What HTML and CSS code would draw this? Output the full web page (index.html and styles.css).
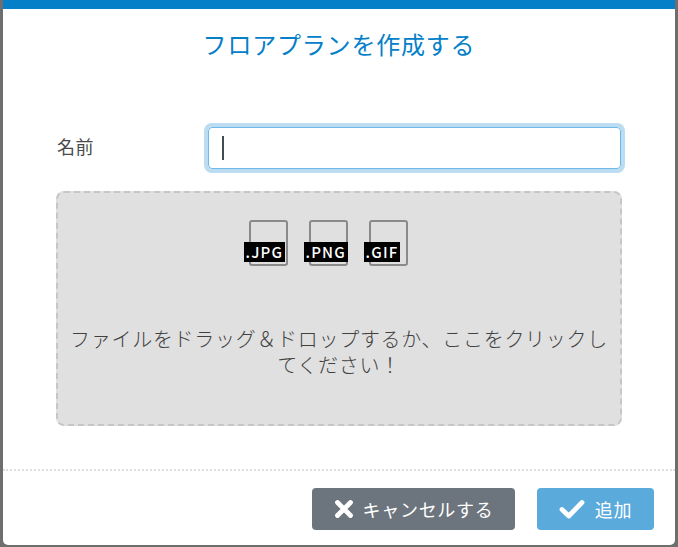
FILE: index.html
```html
<!DOCTYPE html>
<html lang="ja">
<head>
  <meta charset="UTF-8" />
  <title>フロアプランを作成する</title>
  <link rel="stylesheet" href="styles.css">
</head>
<body>
  <div class="modal">
    <h2 class="modal-title">フロアプランを作成する</h2>

    <div class="modal-body">
      <div class="form-row">
        <label class="form-label" for="name">名前</label>
        <div class="name-input" id="name"><span class="caret"></span></div>
      </div>

      <div class="dropzone">
        <div class="file-icons">
          <div class="file-icon"><span class="file-ext">.JPG</span></div>
          <div class="file-icon"><span class="file-ext">.PNG</span></div>
          <div class="file-icon"><span class="file-ext">.GIF</span></div>
        </div>
        <p class="drop-text">ファイルをドラッグ＆ドロップするか、ここをクリックしてください！</p>
      </div>
    </div>

    <div class="modal-footer">
      <button class="btn btn-cancel">
        <svg class="btn-icon" width="20" height="20" viewBox="0 0 20 20"><path d="M3.5 3.5 L16.5 16.5 M16.5 3.5 L3.5 16.5" fill="none" stroke="#fff" stroke-width="4.8" stroke-linecap="round"/></svg>
        キャンセルする
      </button>
      <button class="btn btn-add">
        <svg class="btn-icon" width="26" height="20" viewBox="0 0 26 20"><path d="M3 10.5 L9.8 17 L23 3.5" fill="none" stroke="#fff" stroke-width="4.8" stroke-linecap="round" stroke-linejoin="round"/></svg>
        追加
      </button>
    </div>
  </div>
</body>
</html>
```

FILE: styles.css
```css
html, body {
  height: 100%;
}

body {
  margin: 0;
  padding: 0 3px 2px;
  box-sizing: border-box;
  background-color: #6e6e6e;
  font-family: "Noto Sans CJK JP", "Noto Sans", sans-serif;
  color: #4a4a4a;
  overflow: hidden;
}

.modal {
  height: 100%;
  box-sizing: border-box;
  display: flex;
  flex-direction: column;
  background-color: #fff;
  border-top: 9px solid #0580c8;
  border-radius: 0 0 5px 5px;
}

.modal-title {
  margin: 0;
  padding-top: 17px;
  height: 49px;
  box-sizing: content-box;
  text-align: center;
  font-size: 24px;
  line-height: 36px;
  font-weight: 400;
  letter-spacing: 0.8px;
  color: #0580c8;
}

.modal-body {
  flex: 1;
  padding: 52px 53px 0;
}

.form-row {
  display: flex;
  align-items: center;
}

.form-label {
  width: 151px;
  padding-left: 1px;
  padding-bottom: 4px;
  font-size: 18px;
  line-height: 24px;
  letter-spacing: 0.5px;
}

.name-input {
  flex: 1;
  height: 42px;
  box-sizing: border-box;
  display: flex;
  align-items: center;
  margin-right: 1px;
  padding-left: 13px;
  border: 1px solid #6db9e8;
  border-radius: 4px;
  box-shadow: 0 0 0 4px #bcdcf2;
}

.caret {
  width: 2px;
  height: 24px;
  background-color: #444b52;
}

.dropzone {
  margin-top: 22px;
  height: 235px;
  box-sizing: border-box;
  padding: 27px 10px 0;
  background-color: #e0e0e0;
  border: 2px dashed #c6c6c6;
  border-radius: 8px;
}

.file-icons {
  display: flex;
  justify-content: center;
  gap: 21px;
  margin-right: 22px;
}

.file-icon {
  position: relative;
  width: 39px;
  height: 46px;
  box-sizing: border-box;
  border: 2px solid #8a8a8a;
  border-radius: 3px;
}

.file-ext {
  position: absolute;
  left: -7px;
  top: 20px;
  padding: 0 2px;
  height: 20px;
  background-color: #000;
  color: #fff;
  font-size: 15px;
  font-weight: 500;
  line-height: 20px;
  letter-spacing: 0.08em;
  white-space: nowrap;
}

.drop-text {
  margin: 60px 0 0;
  text-align: center;
  font-size: 20px;
  font-weight: 300;
  line-height: 26px;
  letter-spacing: 0.7px;
  color: #404040;
}

.modal-footer {
  height: 76px;
  box-sizing: border-box;
  display: flex;
  justify-content: flex-end;
  gap: 22px;
  padding: 17px 21px 0;
  border-top: 2px dotted #dedede;
}

.btn {
  height: 42px;
  display: flex;
  align-items: center;
  justify-content: center;
  border: none;
  border-radius: 4px;
  color: #fff;
  font-family: inherit;
  font-size: 18px;
  letter-spacing: 0.7px;
}

.btn-cancel {
  width: 203px;
  gap: 9px;
  background-color: #6c757d;
}

.btn-add {
  width: 117px;
  gap: 10px;
  background-color: #5aaadc;
}
```
